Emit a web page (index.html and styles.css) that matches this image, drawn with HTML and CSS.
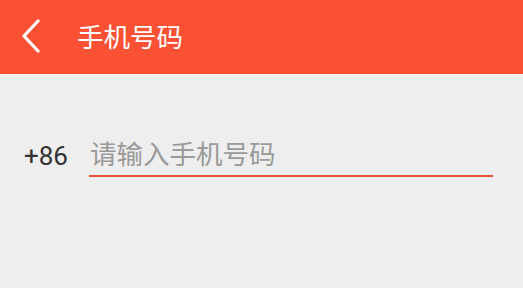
FILE: index.html
```html
<!DOCTYPE html>
<html lang="zh-CN">
<head>
	<meta charset="UTF-8">
	<title>手机号码</title>
	<link rel="stylesheet" href="styles.css">
</head>
<body>
	<div class="header">
		<span class="back">
			<svg width="20" height="34" viewBox="0 0 20 34"><path d="M17 2 L3 17 L17 32" fill="none" stroke="#fff" stroke-width="3.2" stroke-linecap="round" stroke-linejoin="round"/></svg>
		</span>
		<h1 class="title">手机号码</h1>
	</div>
	<div class="form">
		<div class="row">
			<span class="code">+86</span>
			<input class="phone" type="tel" placeholder="请输入手机号码">
		</div>
	</div>
</body>
</html>
```

FILE: styles.css
```css
*{
	margin: 0;
	padding: 0;
	box-sizing: border-box;
}
body{
	width: 523px;
	height: 288px;
	background: #eeeeee;
	font-family: "Noto Sans CJK SC", "Noto Sans", sans-serif;
	overflow: hidden;
}
.header{
	height: 74px;
	background: #fa5034;
	display: flex;
	align-items: center;
	padding-left: 21px;
}
.back{
	display: flex;
	width: 22px;
	margin-top: -3px;
}
.title{
	margin-left: 34px;
	font-size: 26.5px;
	font-weight: normal;
	color: #fff;
	margin-top: -4px;
}
.form{
	padding: 0 30px 0 24px;
	margin-top: 61px;
}
.row{
	display: flex;
	align-items: center;
}
.code{
	font-family: Roboto, "Noto Sans", sans-serif;
	font-size: 26px;
	color: #333;
	width: 65px;
}
.phone{
	flex: 1;
	height: 42px;
	border: none;
	border-bottom: 2px solid #e8533a;
	background: transparent;
	outline: none;
	font-family: inherit;
	font-size: 26.5px;
	color: #333;
	padding: 0 1px 5px;
}
.phone::placeholder{
	color: #9a9a9a;
}
```
